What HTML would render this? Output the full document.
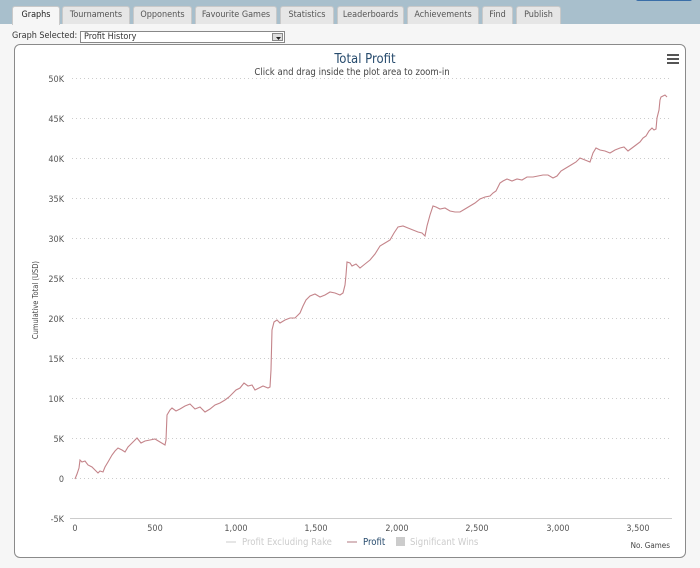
<!DOCTYPE html>
<html><head><meta charset="utf-8"><style>
*{margin:0;padding:0;box-sizing:border-box}
body{width:700px;height:568px;overflow:hidden;background:#f6f6f6;font-family:"DejaVu Sans Condensed","Liberation Sans",sans-serif;font-size:9px;color:#333;position:relative}
.top{position:absolute;left:0;top:0;width:700px;height:24px;background:#a8bfcc}
.btn{position:absolute;right:8px;top:-4px;width:56px;height:5px;background:#3a6ea8;border-radius:2px}
.tab{position:absolute;top:6px;height:18px;background:#e6e6e6;border:1px solid #c9c9c9;border-bottom:none;border-radius:3px 3px 0 0;text-align:center;line-height:16px;color:#555;font-size:9px}
.tab.a{background:#f6f6f6;height:19px;color:#222}
.sel{position:absolute;left:12px;top:31px;font-size:9px;color:#333}
.box{position:absolute;left:80px;top:31px;width:205px;height:12px;border:1px solid #888;background:#fff;font-size:9px;line-height:10px;padding-left:3px}
.arr{position:absolute;right:1px;top:1px;width:11px;height:8px;background:#ddd;border:1px solid #888}
.chart{position:absolute;left:14px;top:44px;width:672px;height:514px;border:1px solid #8a8a8a;border-radius:6px;background:#fff}
</style></head><body>
<div class="top"><div class="btn"></div></div>
<div class="tab a" style="left:12px;width:48px">Graphs</div>
<div class="tab" style="left:62px;width:68px">Tournaments</div>
<div class="tab" style="left:133px;width:59px">Opponents</div>
<div class="tab" style="left:195px;width:82px">Favourite Games</div>
<div class="tab" style="left:280px;width:54px">Statistics</div>
<div class="tab" style="left:337px;width:67px">Leaderboards</div>
<div class="tab" style="left:407px;width:72px">Achievements</div>
<div class="tab" style="left:482px;width:31px">Find</div>
<div class="tab" style="left:516px;width:45px">Publish</div>
<div class="sel">Graph Selected:</div>
<div class="box">Profit History<div class="arr"><svg width="9" height="6" style="position:absolute;left:1px;top:1px"><path d="M2 2h5l-2.5 3z" fill="#222"/></svg></div></div>
<div class="chart"></div>
<svg width="700" height="568" style="position:absolute;left:0;top:0" font-family="DejaVu Sans Condensed, Liberation Sans, sans-serif">
<text x="365" y="63" text-anchor="middle" font-size="13" fill="#274b6d">Total Profit</text>
<text x="352" y="75" text-anchor="middle" font-size="9.5" fill="#444">Click and drag inside the plot area to zoom-in</text>
<g fill="#555"><rect x="667" y="54" width="12" height="2"/><rect x="667" y="58" width="12" height="2"/><rect x="667" y="62" width="12" height="2"/></g>
<g stroke="#ccc" stroke-dasharray="1,3" stroke-width="1">
<line x1="72" y1="78.5" x2="672" y2="78.5"/><line x1="72" y1="118.5" x2="672" y2="118.5"/><line x1="72" y1="158.5" x2="672" y2="158.5"/><line x1="72" y1="198.5" x2="672" y2="198.5"/><line x1="72" y1="238.5" x2="672" y2="238.5"/><line x1="72" y1="278.5" x2="672" y2="278.5"/><line x1="72" y1="318.5" x2="672" y2="318.5"/><line x1="72" y1="358.5" x2="672" y2="358.5"/><line x1="72" y1="398.5" x2="672" y2="398.5"/><line x1="72" y1="438.5" x2="672" y2="438.5"/><line x1="72" y1="478.5" x2="672" y2="478.5"/></g>
<line x1="70" y1="518.5" x2="672" y2="518.5" stroke="#ccc"/>
<g font-size="9" fill="#555" text-anchor="end">
<text x="64" y="82">50K</text><text x="64" y="122">45K</text><text x="64" y="162">40K</text><text x="64" y="202">35K</text><text x="64" y="242">30K</text><text x="64" y="282">25K</text><text x="64" y="322">20K</text><text x="64" y="362">15K</text><text x="64" y="402">10K</text><text x="64" y="442">5K</text><text x="64" y="482">0</text><text x="64" y="522">-5K</text></g>
<g font-size="9" fill="#555" text-anchor="middle">
<text x="75" y="531">0</text><text x="155" y="531">500</text><text x="236" y="531">1,000</text><text x="316" y="531">1,500</text><text x="397" y="531">2,000</text><text x="477" y="531">2,500</text><text x="558" y="531">3,000</text><text x="638" y="531">3,500</text></g>
<text x="38" y="300" font-size="7.5" fill="#444" text-anchor="middle" transform="rotate(-90 38 300)">Cumulative Total (USD)</text>
<text x="670" y="548" font-size="8" fill="#444" text-anchor="end">No. Games</text>
<g font-size="9.5">
<line x1="226" y1="542" x2="236" y2="542" stroke="#ccc"/><text x="242" y="545" fill="#ccc">Profit Excluding Rake</text>
<line x1="347" y1="542" x2="357" y2="542" stroke="#b27a80"/><text x="363" y="545" fill="#274b6d">Profit</text>
<rect x="396" y="537" width="9" height="9" fill="#ccc"/><text x="410" y="545" fill="#ccc">Significant Wins</text></g>
<polyline fill="none" stroke="#c4848a" stroke-width="1.1" points="75,479 77,474 79,468 80,460 82,462 85,461 88,465 92,467 95,470 98,473 100,471 103,472 105,467 108,462 112,455 115,451 118,448 122,450 125,452 128,447 130,445 134,441 137,438 141,443 145,441 150,440 155,439 160,442 165,445 166,440 167,415 170,410 172,408 176,411 180,409 185,406 190,404 195,409 200,407 205,412 210,409 215,405 220,403 225,400 229,397 232,394 236,390 240,388 244,383 248,386 252,385 255,390 259,388 263,386 268,388 270,387 271,370 272,330 274,322 277,320 280,323 285,320 290,318 295,318 300,313 303,306 306,300 310,296 315,294 320,297 325,295 330,292 335,293 340,295 343,293 345,285 346,275 347,262 350,263 352,266 356,264 360,268 365,264 370,260 375,254 380,246 385,243 390,240 394,233 398,227 403,226 408,228 413,230 418,232 422,233 425,236 427,226 430,215 433,206 436,207 440,209 445,208 450,211 455,212 460,212 465,209 470,206 475,203 480,199 485,197 490,196 493,193 496,191 500,183 503,181 507,179 512,181 517,179 522,180 527,177 533,177 538,176 543,175 548,175 553,178 557,176 561,171 566,168 571,165 576,162 580,158 585,160 590,162 593,153 596,148 600,150 605,151 610,153 615,150 620,148 624,147 628,151 632,148 636,145 640,142 643,138 646,136 649,131 652,128 654,130 656,129 657,118 659,110 660,100 661,97 663,96 665,95 667,97"/>
</svg>
</body></html>
